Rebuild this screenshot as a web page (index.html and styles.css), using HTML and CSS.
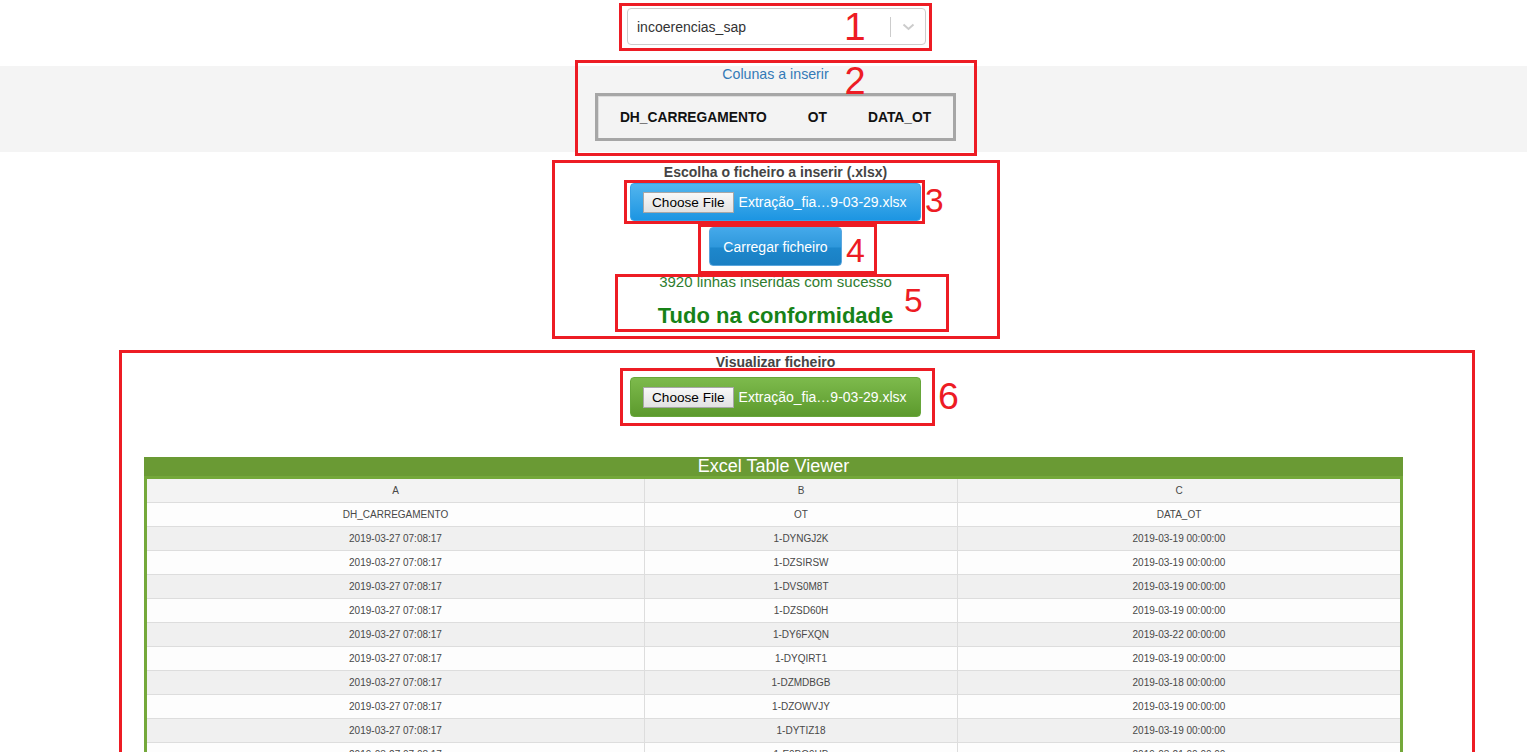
FILE: index.html
```html
<!DOCTYPE html>
<html lang="pt">
<head>
<meta charset="utf-8">
<title>Inserir ficheiro</title>
<link rel="stylesheet" href="styles.css">
</head>
<body>
<div class="sec sec-top">
  <div class="mark mark-select">
    <div class="select">
      <span class="select-value">incoerencias_sap</span>
      <span class="select-sep"></span>
      <span class="select-arrow"><svg width="13" height="8" viewBox="0 0 13 8"><polyline points="1.5,1.5 6.5,6 11.5,1.5" fill="none" stroke="#cccccc" stroke-width="2"/></svg></span>
    </div>
    <span class="num num-1">1</span>
  </div>
</div>

<div class="sec band">
  <div class="mark mark-cols">
    <div class="cols-title">Colunas a inserir</div>
    <div class="cols-box"><span>DH_CARREGAMENTO</span><span>OT</span><span>DATA_OT</span></div>
    <span class="num num-2">2</span>
  </div>
</div>

<div class="sec">
  <div class="mark mark-upload">
    <div class="label">Escolha o ficheiro a inserir (.xlsx)</div>
    <div class="mark mark-file">
      <div class="file-btn file-blue"><span class="choose">Choose File</span><span class="file-name">Extração_fia…9-03-29.xlsx</span></div>
      <span class="num num-3">3</span>
    </div>
    <div class="mark mark-load">
      <button class="load-btn" type="button">Carregar ficheiro</button>
      <span class="num num-4">4</span>
    </div>
    <div class="mark mark-status">
      <div class="status-ok">3920 linhas inseridas com sucesso</div>
      <div class="status-big">Tudo na conformidade</div>
      <span class="num num-5">5</span>
    </div>
  </div>
</div>

<div class="mark mark-view">
  <div class="label label-view">Visualizar ficheiro</div>
  <div class="view-file-row">
    <div class="mark mark-file2">
      <div class="file-btn file-green"><span class="choose">Choose File</span><span class="file-name">Extração_fia…9-03-29.xlsx</span></div>
      <span class="num num-6">6</span>
    </div>
  </div>
  <div class="viewer">
    <div class="viewer-title">Excel Table Viewer</div>
    <div class="grid">
      <div class="row row-letters"><div>A</div><div>B</div><div>C</div></div>
      <div class="row row-head"><div>DH_CARREGAMENTO</div><div>OT</div><div>DATA_OT</div></div>
      <div class="row row-odd"><div>2019-03-27 07:08:17</div><div>1-DYNGJ2K</div><div>2019-03-19 00:00:00</div></div>
      <div class="row row-even"><div>2019-03-27 07:08:17</div><div>1-DZSIRSW</div><div>2019-03-19 00:00:00</div></div>
      <div class="row row-odd"><div>2019-03-27 07:08:17</div><div>1-DVS0M8T</div><div>2019-03-19 00:00:00</div></div>
      <div class="row row-even"><div>2019-03-27 07:08:17</div><div>1-DZSD60H</div><div>2019-03-19 00:00:00</div></div>
      <div class="row row-odd"><div>2019-03-27 07:08:17</div><div>1-DY6FXQN</div><div>2019-03-22 00:00:00</div></div>
      <div class="row row-even"><div>2019-03-27 07:08:17</div><div>1-DYQIRT1</div><div>2019-03-19 00:00:00</div></div>
      <div class="row row-odd"><div>2019-03-27 07:08:17</div><div>1-DZMDBGB</div><div>2019-03-18 00:00:00</div></div>
      <div class="row row-even"><div>2019-03-27 07:08:17</div><div>1-DZOWVJY</div><div>2019-03-19 00:00:00</div></div>
      <div class="row row-odd"><div>2019-03-27 07:08:17</div><div>1-DYTIZ18</div><div>2019-03-19 00:00:00</div></div>
      <div class="row row-even"><div>2019-03-27 07:08:17</div><div>1-E0BO9HB</div><div>2019-03-21 00:00:00</div></div>
    </div>
  </div>
</div>
</body>
</html>
```

FILE: styles.css
```css
html {
  overflow: hidden;
}

body {
  margin: 0;
  background: #ffffff;
  font-family: "Liberation Sans", Arial, sans-serif;
  color: #333333;
}

.sec {
  display: flex;
  justify-content: center;
  padding-left: 24px;
}

.sec-top {
  padding-top: 3px;
}

.mark {
  position: relative;
  border: 3px solid #ed1c24;
  box-sizing: border-box;
}

.num {
  position: absolute;
  color: #ed1c24;
  line-height: 1;
  font-family: "Liberation Sans", Arial, sans-serif;
  font-weight: normal;
}

/* 1 - select */
.mark-select {
  padding: 2px 3px 3px 5px;
}

.select {
  display: flex;
  align-items: center;
  width: 299px;
  height: 37px;
  box-sizing: border-box;
  border: 1px solid #cccccc;
  border-radius: 4px;
  background: #ffffff;
}

.select-value {
  flex: 1;
  padding-left: 9px;
  font-size: 14px;
  color: #333333;
}

.select-sep {
  width: 1px;
  height: 20px;
  background: #cccccc;
}

.select-arrow {
  display: flex;
  align-items: center;
  justify-content: center;
  width: 34px;
}

.num-1 {
  font-size: 39px;
  top: 1px;
  left: 222px;
}

/* 2 - columns */
.band {
  margin-top: 15px;
  height: 86px;
  background: #f4f4f4;
}

.mark-cols {
  margin: -6px 0 -4px;
  width: 402px;
  height: 96px;
  display: flex;
  flex-direction: column;
  align-items: center;
}

.cols-title {
  padding-top: 1px;
  line-height: 20px;
  font-size: 14.2px;
  color: #337ab7;
}

.cols-box {
  margin-top: 9px;
  height: 48px;
  box-sizing: border-box;
  display: flex;
  align-items: center;
  gap: 41px;
  padding: 0 22px;
  border: 3px solid #a6a6a6;
  box-shadow: inset 1px 1px 0 #dcdcdc;
  background: #f3f3f3;
  font-size: 13.8px;
  font-weight: bold;
  color: #111111;
}

.num-2 {
  font-size: 38px;
  top: -1px;
  left: 267px;
}

/* 3/4/5 - upload */
.mark-upload {
  margin-top: 8px;
  width: 448px;
  padding-bottom: 4px;
  display: flex;
  flex-direction: column;
  align-items: center;
}

.label {
  padding-top: 1px;
  line-height: 16px;
  font-size: 14px;
  font-weight: bold;
  color: #444444;
}

.mark-file {
  padding: 0 1px 0 3px;
  margin-right: 2px;
}

.file-btn {
  display: flex;
  align-items: center;
  width: 291px;
  box-sizing: border-box;
  padding-left: 12px;
  border-radius: 4px;
}

.file-blue {
  height: 38px;
  border: 1px solid #3aa2e5;
  background: linear-gradient(#52b5ee, #1c95e2);
}

.file-green {
  height: 40px;
  border: 1px solid #67a63a;
  background: linear-gradient(#7dba4c, #5c9a2d);
}

.choose {
  height: 21px;
  box-sizing: border-box;
  padding: 0 8px;
  border: 1px solid #a7a7a7;
  background: linear-gradient(#f8f8f8, #e2e2e2);
  font-size: 13.6px;
  line-height: 19px;
  color: #000000;
}

.file-name {
  margin-left: 5px;
  font-size: 14px;
  color: #ffffff;
}

.num-3 {
  font-size: 33.5px;
  top: 1px;
  left: 298px;
}

.mark-load {
  margin-left: 24px;
  padding: 0 32px 5px 8px;
}

.load-btn {
  display: block;
  width: 133px;
  height: 39px;
  padding: 0;
  border: 1px solid #5aa6de;
  border-radius: 4px;
  background: linear-gradient(#44a9ea 0%, #2f98dc 50%, #1d87cc 55%, #1a7fc3 100%);
  font-family: "Liberation Sans", Arial, sans-serif;
  font-size: 14px;
  color: #ffffff;
}

.num-4 {
  font-size: 34px;
  top: 6px;
  left: 145px;
}

.mark-status {
  margin-left: 13px;
  width: 334px;
  padding-right: 13px;
  display: flex;
  flex-direction: column;
  align-items: center;
}

.status-ok {
  position: relative;
  z-index: -1;
  margin-top: -4px;
  line-height: 17px;
  font-size: 15px;
  color: #2f7d2f;
}

.status-big {
  margin-top: 13px;
  line-height: 26px;
  font-size: 22px;
  font-weight: bold;
  color: #178217;
}

.num-5 {
  font-size: 33.5px;
  top: 7px;
  left: 286px;
}

/* 6 - viewer */
.mark-view {
  margin: 11px 0 0 119px;
  width: 1356px;
  padding: 0 69px 40px 22px;
}

.label-view {
  padding: 2px 0 0 4px;
  line-height: 15px;
  text-align: center;
}

.view-file-row {
  display: flex;
  justify-content: center;
  margin-top: -2px;
}

.mark-file2 {
  margin-left: 8px;
  padding: 6px 11px 6px 7px;
}

.num-6 {
  font-size: 37.5px;
  top: 7px;
  left: 315px;
}

.viewer {
  margin-top: 31px;
  width: 1259px;
}

.viewer-title {
  height: 19px;
  line-height: 19px;
  background: #6a9a34;
  color: #ffffff;
  font-size: 18px;
  text-align: center;
}

.grid {
  border: 3px solid #74a83a;
  border-bottom: none;
}

.row {
  display: grid;
  grid-template-columns: 498px 313px 1fr;
}

.row > div {
  height: 24px;
  box-sizing: border-box;
  border-bottom: 1px solid #dddddd;
  line-height: 23px;
  font-size: 10px;
  color: #484848;
  text-align: center;
}

.row > div:not(:last-child) {
  border-right: 1px solid #dddddd;
}

.row-letters {
  background: #f3f3f3;
}

.row-head {
  background: #fdfdfd;
}

.row-odd {
  background: #f0f0f0;
}

.row-even {
  background: #fdfdfd;
}
```
